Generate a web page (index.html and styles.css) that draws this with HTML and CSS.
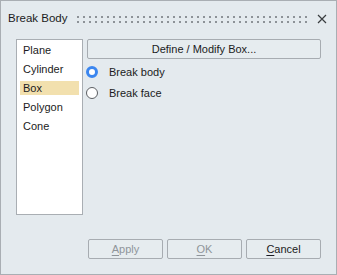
FILE: index.html
```html
<!DOCTYPE html>
<html>
<head>
<meta charset="utf-8">
<link rel="stylesheet" href="styles.css">
</head>
<body>
<div class="dialog">
  <div class="titlebar">
    <span class="title">Break Body</span>
    <svg class="grip" height="7" xmlns="http://www.w3.org/2000/svg">
      <defs><pattern id="dots" width="6" height="5" patternUnits="userSpaceOnUse"><rect width="2" height="2" fill="#8d9297"/></pattern></defs>
      <rect width="100%" height="7" fill="url(#dots)"/>
    </svg>
    <svg class="close" width="10" height="10" viewBox="0 0 10 10" xmlns="http://www.w3.org/2000/svg">
      <path d="M1 1 L9 9 M9 1 L1 9" stroke="#3a3d40" stroke-width="1.2" fill="none"/>
    </svg>
  </div>
  <div class="content">
    <div class="main">
      <ul class="list">
        <li>Plane</li>
        <li>Cylinder</li>
        <li class="selected">Box</li>
        <li>Polygon</li>
        <li>Cone</li>
      </ul>
      <div class="panel">
        <button class="btn wide">Define / Modify Box...</button>
        <label class="radio"><span class="dot checked"></span>Break body</label>
        <label class="radio"><span class="dot"></span>Break face</label>
      </div>
    </div>
    <div class="footer">
      <button class="btn disabled"><u>A</u>pply</button>
      <button class="btn disabled"><u>O</u>K</button>
      <button class="btn"><u>C</u>ancel</button>
    </div>
  </div>
</div>
</body>
</html>
```
FILE: styles.css
```css
html, body {
  margin: 0;
  padding: 0;
}
body {
  font-family: "Liberation Sans", Arial, sans-serif;
  font-size: 11px;
  color: #1b1b22;
}
.dialog {
  width: 337px;
  height: 275px;
  box-sizing: border-box;
  border: 1px solid #a9aeb3;
  background: #e4eaee;
  display: flex;
  flex-direction: column;
}
.titlebar {
  height: 35px;
  display: flex;
  align-items: center;
  padding: 0 9px 0 7px;
}
.title {
  width: 69px;
  font-size: 11.5px;
  padding-bottom: 1px;
}
.grip {
  flex: 1;
  margin-right: 10px;
  margin-top: 2px;
}
.close {
  margin-top: 1px;
}
.content {
  flex: 1;
  display: flex;
  flex-direction: column;
  padding: 3px 15px 15px 15px;
}
.main {
  display: flex;
  gap: 4px;
  height: 176px;
}
.list {
  list-style: none;
  margin: 0;
  padding: 3px 3px 0 3px;
  width: 67px;
  box-sizing: border-box;
  background: #ffffff;
  border: 1px solid #a9aeb3;
  display: flex;
  flex-direction: column;
  gap: 5px;
}
.list li {
  height: 14px;
  line-height: 14px;
  padding-left: 3px;
}
.list li.selected {
  background: #f2e0ae;
}
.panel {
  flex: 1;
  display: flex;
  flex-direction: column;
}
.btn {
  font-family: inherit;
  font-size: 11px;
  color: #1b1b22;
  background: #e6ecef;
  border: 1px solid #a7acb1;
  border-radius: 2px;
  padding: 0;
  height: 20px;
  width: 75px;
  box-sizing: border-box;
}
.btn.wide {
  width: 100%;
}
.btn.disabled {
  color: #8f959a;
}
.btn u {
  text-decoration-thickness: 1px;
  text-underline-offset: 2px;
}
.radio {
  display: flex;
  align-items: center;
  height: 21px;
}
.radio:first-of-type {
  margin-top: 2px;
}
.dot {
  width: 12px;
  height: 12px;
  box-sizing: border-box;
  border-radius: 50%;
  border: 1px solid #5c5f63;
  background: #fff;
  margin-left: -1px;
  margin-right: 11px;
}
.dot.checked {
  border: 3.5px solid #3b86ef;
  background: #fff;
}
.footer {
  margin-top: auto;
  display: flex;
  justify-content: flex-end;
  gap: 4px;
}
```
